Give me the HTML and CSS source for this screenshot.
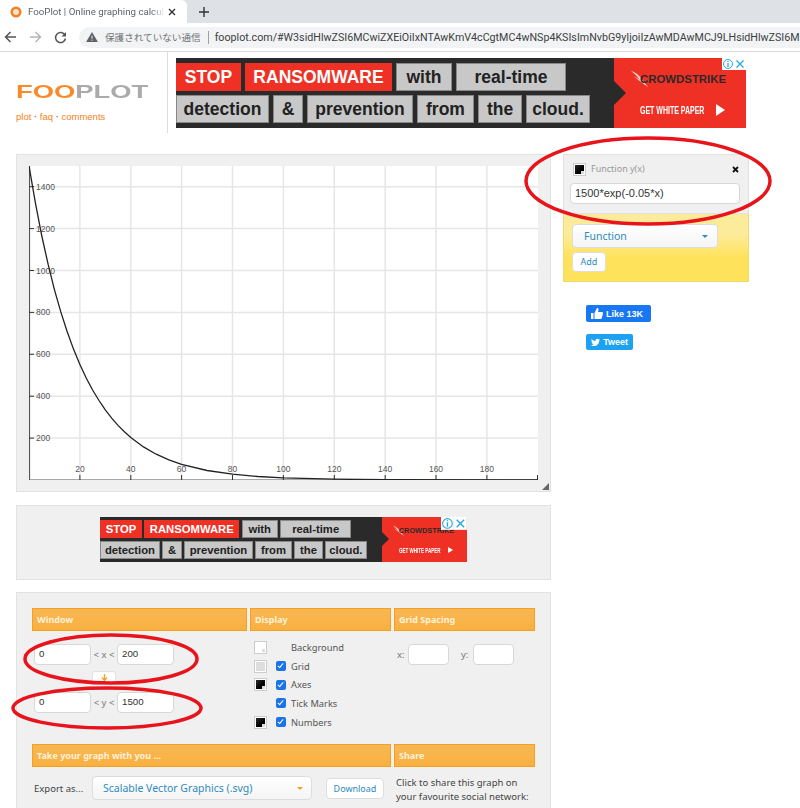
FILE: index.html
```html
<!DOCTYPE html>
<html lang="ja">
<head>
    <meta charset="UTF-8">
    <meta name="viewport" content="width=device-width, initial-scale=1.0">
    <title>FooPlot | Online graphing calculator</title>
    <link rel="stylesheet" href="styles.css">
</head>
<body>
    <!-- Browser chrome -->
    <div class="tabstrip">
        <div class="tab">
            <svg class="favicon" width="12" height="12" viewBox="0 0 12 12"><circle cx="6" cy="6" r="5.500" fill="#f58220"/><path d="M4 4h4v4H4zM6 3v6M3 6h6" fill="none" stroke="#fff" stroke-width="1"/></svg>
            <span class="tab-title">FooPlot | Online graphing calcula</span>
            <svg class="tab-close" width="8" height="8" viewBox="0 0 8 8"><path d="M1 1l6 6M7 1L1 7" stroke="#333" stroke-width="1.400"/></svg>
        </div>
        <svg class="tab-new" width="10" height="10" viewBox="0 0 10 10"><path d="M5 0v10M0 5h10" stroke="#333" stroke-width="1.400"/></svg>
    </div>
    <div class="toolbar">
        <svg width="13" height="12" viewBox="0 0 13 12"><path d="M12 6H2M6.500 1L1.500 6l5 5" fill="none" stroke="#555" stroke-width="1.500"/></svg>
        <svg width="13" height="12" viewBox="0 0 13 12"><path d="M1 6h10M6.500 1l5 5-5 5" fill="none" stroke="#b5b5b5" stroke-width="1.500"/></svg>
        <svg width="13" height="13" viewBox="0 0 13 13"><path d="M11 4.200A5 5 0 1 0 11.500 7.500" fill="none" stroke="#555" stroke-width="1.500"/><path d="M12 1v4.500H7.500z" fill="#555"/></svg>
        <div class="omnibox">
            <svg class="omni-warn" width="12" height="10" viewBox="0 0 13 11"><path d="M6.500 0L13 11H0z" fill="#5f6368"/><path d="M6 4h1v3.500H6zM6 8.500h1v1H6z" fill="#fff"/></svg>
            <span class="not-secure">保護されていない通信</span>
            <span class="omni-sep"></span>
            <span class="url">fooplot.com/#W3sidHlwZSI6MCwiZXEiOiIxNTAwKmV4cCgtMC4wNSp4KSIsImNvbG9yIjoiIzAwMDAwMCJ9LHsidHlwZSI6M</span>
        </div>
    </div>

    <!-- Site header -->
    <div class="site-header">
        <div class="brand">
            <div class="logo"><span class="logo-text"><span class="logo-foo">FOO</span>PLOT</span></div>
            <div class="site-nav">plot <b>·</b> faq <b>·</b> comments</div>
        </div>
        <div class="ad">
            <div class="ad-words">
                <div class="ad-row">
                    <span class="word red w-stop">STOP</span>
                    <span class="word red w-ransom">RANSOMWARE</span>
                    <span class="word w-with">with</span>
                    <span class="word w-real">real-time</span>
                </div>
                <div class="ad-row">
                    <span class="word w-detect">detection</span>
                    <span class="word w-amp">&amp;</span>
                    <span class="word w-prevent">prevention</span>
                    <span class="word w-from">from</span>
                    <span class="word w-the">the</span>
                    <span class="word w-cloud">cloud.</span>
                </div>
            </div>
            <div class="ad-cta">
                <div class="ad-brand">
                    <svg width="18" height="18" viewBox="0 0 18 18"><path d="M0 1c5 1 9 5 17 16C10 12 5 8 2 6c3 1 5 3 7 4C6 6 3 3 0 1z" fill="#fbd5cf"/></svg>
                    <span>CROWDSTRIKE</span>
                </div>
                <div class="ad-paper">
                    <span class="ad-paper-text">GET WHITE PAPER</span>
                    <span class="ad-play"></span>
                </div>
            </div>
            <span class="ad-notch"></span>
            <div class="ad-badges">
                <svg width="12" height="12" viewBox="0 0 12 12"><rect width="12" height="12" fill="#fff"/><circle cx="6" cy="6" r="4.500" fill="none" stroke="#25a9e0"/><path d="M6 5v4M6 3v1" stroke="#25a9e0" stroke-width="1.300"/></svg>
                <svg width="12" height="12" viewBox="0 0 12 12"><rect width="12" height="12" fill="#fff"/><path d="M2.500 2.500l7 7M9.500 2.500l-7 7" stroke="#25a9e0" stroke-width="1.300"/></svg>
            </div>
        </div>
    </div>

    <div class="page">
        <div class="main-col">
            <!-- Graph -->
            <div class="panel plot-panel">
                <svg class="plot" width="509" height="314" viewBox="0 0 509 314">
                    <g class="grid">
                        <path d="M50.900 0V314M101.800 0V314M152.600 0V314M203.500 0V314M254.400 0V314M305.300 0V314M356.200 0V314M407 0V314M457.900 0V314"/>
                        <path d="M0 20.700H509M0 62.600H509M0 104.500H509M0 146.400H509M0 188.300H509M0 230.200H509M0 272.100H509"/>
                    </g>
                    <path class="axes" d="M0.500 0V314H509"/>
                    <path class="ticks" d="M0 20.700h5M0 62.600h5M0 104.500h5M0 146.400h5M0 188.300h5M0 230.200h5M0 272.100h5M50.900 309v5M101.800 309v5M152.600 309v5M203.500 309v5M254.400 309v5M305.300 309v5M356.200 309v5M407 309v5M457.900 309v5M508.500 309v5"/>
                    <g class="tick-y">
                        <text x="7" y="23.700">1400</text>
                        <text x="7" y="65.600">1200</text>
                        <text x="7" y="107.500">1000</text>
                        <text x="7" y="149.400">800</text>
                        <text x="7" y="191.300">600</text>
                        <text x="7" y="233.200">400</text>
                        <text x="7" y="275.100">200</text>
                    </g>
                    <g class="tick-x">
                        <text x="50.900" y="306">20</text>
                        <text x="101.800" y="306">40</text>
                        <text x="152.600" y="306">60</text>
                        <text x="203.500" y="306">80</text>
                        <text x="254.400" y="306">100</text>
                        <text x="305.300" y="306">120</text>
                        <text x="356.200" y="306">140</text>
                        <text x="407" y="306">160</text>
                        <text x="457.900" y="306">180</text>
                    </g>
                    <polyline class="curve" points="0,0 6.400,36.900 12.700,69.500 19.100,98.200 25.400,123.600 31.800,145.900 38.200,165.700 44.500,183.100 50.900,198.500 57.200,212 63.600,224 70,234.500 76.300,243.900 82.700,252.100 89,259.400 95.400,265.800 101.800,271.500 114.500,280.900 127.200,288.200 139.900,293.900 152.600,298.400 178.100,304.500 203.500,308.200 229,310.500 254.400,311.900 305.300,313.200 356,313.700 509,314"/>
                </svg>
                <svg class="resize-grip" width="7" height="7" viewBox="0 0 7 7"><path d="M7 0v7H0z" fill="#666"/></svg>
            </div>

            <!-- Second ad -->
            <div class="panel ad-panel">
                <div class="ad ad-small">
                    <div class="ad-words">
                        <div class="ad-row">
                            <span class="word red w-stop">STOP</span>
                            <span class="word red w-ransom">RANSOMWARE</span>
                            <span class="word w-with">with</span>
                            <span class="word w-real">real-time</span>
                        </div>
                        <div class="ad-row">
                            <span class="word w-detect">detection</span>
                            <span class="word w-amp">&amp;</span>
                            <span class="word w-prevent">prevention</span>
                            <span class="word w-from">from</span>
                            <span class="word w-the">the</span>
                            <span class="word w-cloud">cloud.</span>
                        </div>
                    </div>
                    <div class="ad-cta">
                        <div class="ad-brand">
                            <svg width="18" height="18" viewBox="0 0 18 18"><path d="M0 1c5 1 9 5 17 16C10 12 5 8 2 6c3 1 5 3 7 4C6 6 3 3 0 1z" fill="#fbd5cf"/></svg>
                            <span>CROWDSTRIKE</span>
                        </div>
                        <div class="ad-paper">
                            <span class="ad-paper-text">GET WHITE PAPER</span>
                            <span class="ad-play"></span>
                        </div>
                    </div>
                    <span class="ad-notch"></span>
                    <div class="ad-badges">
                        <svg width="20" height="20" viewBox="0 0 12 12"><rect width="12" height="12" fill="#fff"/><circle cx="6" cy="6" r="4.500" fill="none" stroke="#25a9e0"/><path d="M6 5v4M6 3v1" stroke="#25a9e0" stroke-width="1.300"/></svg>
                        <svg width="20" height="20" viewBox="0 0 12 12"><rect width="12" height="12" fill="#fff"/><path d="M2.500 2.500l7 7M9.500 2.500l-7 7" stroke="#25a9e0" stroke-width="1.300"/></svg>
                    </div>
                </div>
            </div>

            <!-- Settings -->
            <div class="panel settings">
                <div class="settings-grid">
                    <div class="section">
                        <div class="section-title">Window</div>
                        <div class="window-body">
                            <div class="range-row">
                                <span class="field field-range">0</span>
                                <span class="range-op">&lt; x &lt;</span>
                                <span class="field field-range">200</span>
                            </div>
                            <div class="swap-row">
                                <span class="swap-btn"><svg width="7" height="7" viewBox="0 0 7 7"><path d="M3.500 0v6M1 3.500l2.500 3 2.500-3" fill="none" stroke="#f5a020" stroke-width="1.300"/></svg></span>
                            </div>
                            <div class="range-row">
                                <span class="field field-range">0</span>
                                <span class="range-op">&lt; y &lt;</span>
                                <span class="field field-range">1500</span>
                            </div>
                        </div>
                    </div>
                    <div class="section">
                        <div class="section-title">Display</div>
                        <div class="display-body">
                            <div class="display-row"><span class="swatch swatch-white"></span><span class="check-empty"></span><span>Background</span></div>
                            <div class="display-row"><span class="swatch swatch-grey"></span><span class="check"></span><span>Grid</span></div>
                            <div class="display-row"><span class="swatch"></span><span class="check"></span><span>Axes</span></div>
                            <div class="display-row"><span class="swatch-none"></span><span class="check"></span><span>Tick Marks</span></div>
                            <div class="display-row"><span class="swatch"></span><span class="check"></span><span>Numbers</span></div>
                        </div>
                    </div>
                    <div class="section">
                        <div class="section-title">Grid Spacing</div>
                        <div class="spacing-body">
                            <span>x:</span><span class="field field-spacing"></span>
                            <span class="spacing-y">y:</span><span class="field field-spacing"></span>
                        </div>
                    </div>
                    <div class="section section-wide">
                        <div class="section-title">Take your graph with you ...</div>
                        <div class="export-body">
                            <span class="export-label">Export as...</span>
                            <div class="dropdown dropdown-export"><span>Scalable Vector Graphics (.svg)</span><span class="caret caret-orange"></span></div>
                            <span class="btn btn-download">Download</span>
                        </div>
                    </div>
                    <div class="section">
                        <div class="section-title">Share</div>
                        <p class="share-text">Click to share this graph on<br>your favourite social network:</p>
                    </div>
                </div>
            </div>
        </div>

        <div class="side-col">
            <div class="func-panel">
                <div class="func-head">
                    <span class="swatch"></span>
                    <span class="func-label">Function y(x)</span>
                    <svg class="func-close" width="7" height="7" viewBox="0 0 7 7"><path d="M1 1l5 5M6 1L1 6" stroke="#111" stroke-width="1.800"/></svg>
                </div>
                <div class="field func-input">1500*exp(-0.05*x)</div>
            </div>
            <div class="add-panel">
                <div class="dropdown dropdown-func"><span>Function</span><span class="caret"></span></div>
                <span class="btn btn-add">Add</span>
            </div>
            <div class="social">
                <span class="social-btn like">
                    <svg width="12" height="11" viewBox="0 0 12 11"><path d="M0 5h2.500v6H0zM3.500 5l2.500-5c1.300 0 1.700 1 1.500 2L7 4h4c.8 0 1.200.7 1 1.400l-1.200 4.600c-.2.600-.6 1-1.200 1H3.500z" fill="#fff"/></svg>
                    Like 13K
                </span>
                <span class="social-btn tweet">
                    <svg width="11" height="9" viewBox="0 0 24 20"><path d="M24 2.400c-.9.400-1.800.7-2.800.8 1-.6 1.800-1.600 2.200-2.700-1 .6-2 1-3.100 1.200A4.900 4.900 0 0 0 11.900 6.200C7.800 6 4.200 4 1.700.9c-1.300 2.200-.7 5.100 1.500 6.600-.8 0-1.600-.2-2.200-.6 0 2.300 1.600 4.400 3.900 4.900-.7.200-1.500.2-2.200.1.600 2 2.400 3.400 4.600 3.400A9.900 9.900 0 0 1 0 17.300 14 14 0 0 0 7.500 19.500c9.100 0 14.300-7.700 14-14.600 1-.7 1.800-1.500 2.500-2.500z" fill="#fff"/></svg>
                    Tweet
                </span>
            </div>
        </div>
    </div>

    <!-- Hand-drawn red circles over the page -->
    <svg class="annotations" width="800" height="808" viewBox="0 0 800 808">
        <ellipse cx="648" cy="181" rx="122" ry="43"/>
        <ellipse cx="111" cy="659" rx="86" ry="24"/>
        <ellipse cx="107" cy="708" rx="94" ry="20"/>
    </svg>
</body>
</html>
```

FILE: styles.css
```css
body {
    margin: 0;
    height: 808px;
    overflow: hidden;
    position: relative;
    background: #fff;
    color: #333;
    font-family: 'Noto Sans', sans-serif;
    font-size: 9px;
}

/* Browser chrome */
.tabstrip {
    height: 23px;
    background: #dee1e6;
    display: flex;
    align-items: center;
}

.tab {
    width: 187px;
    height: 23px;
    box-sizing: border-box;
    background: #fff;
    border-top-right-radius: 6px;
    display: flex;
    align-items: center;
    padding-left: 10px;
}

.tab-title {
    font-family: 'Roboto', sans-serif;
    font-size: 9.700px;
    color: #5f6368;
    width: 137px;
    margin-left: 6px;
    white-space: nowrap;
    overflow: hidden;
    mask-image: linear-gradient(90deg, #000 90%, transparent);
}

.tab-close {
    margin-left: 3px;
}

.tab-new {
    margin-left: 12px;
}

.toolbar {
    height: 29px;
    box-sizing: border-box;
    border-bottom: 1px solid #dcdcdc;
    display: flex;
    align-items: center;
    gap: 12px;
    padding-left: 4px;
}

.omnibox {
    flex: 1;
    min-width: 0;
    height: 21px;
    background: #f1f3f4;
    border-radius: 11px 0 0 11px;
    display: flex;
    align-items: center;
    padding-left: 7px;
    overflow: hidden;
    white-space: nowrap;
}

.omni-warn {
    flex: none;
}

.not-secure {
    flex: none;
    font-family: 'Noto Sans CJK JP', sans-serif;
    font-size: 9.600px;
    color: #6f7377;
    margin-left: 7px;
}

.omni-sep {
    flex: none;
    width: 1px;
    height: 13px;
    background: #9aa0a6;
    margin: 0 6px 0 7px;
}

.url {
    font-family: 'Roboto', sans-serif;
    font-size: 10.700px;
    color: #3c4043;
}

/* Header */
.site-header {
    display: flex;
    height: 81px;
}

.brand {
    width: 168px;
    border-right: 1px solid #ddd;
    padding-left: 16px;
    box-sizing: border-box;
}

.logo {
    margin-top: 30px;
    height: 20px;
}

.logo-text {
    display: inline-block;
    font-family: 'Liberation Sans', sans-serif;
    font-weight: bold;
    font-size: 18px;
    line-height: 20px;
    color: #aaa;
    transform: scaleX(1.520);
    transform-origin: left center;
}

.logo-foo {
    color: #f88a2c;
}

.site-nav {
    margin-top: 9px;
    font-family: 'Liberation Sans', sans-serif;
    font-size: 9.500px;
    color: #f58220;
}

.site-nav b {
    color: #888;
}

/* Ad banner */
.ad {
    position: relative;
    display: flex;
    width: 570px;
    height: 70px;
    margin: 6px 0 0 8px;
    font-family: 'Liberation Sans', sans-serif;
}

.ad-small {
    zoom: 0.644;
    margin: 0;
}

.ad-words {
    width: 438px;
    box-sizing: border-box;
    background: #2a2a2a;
    padding-top: 5px;
    display: flex;
    flex-direction: column;
    gap: 4px;
}

.ad-row {
    display: flex;
    gap: 4px;
}

.word {
    height: 28px;
    box-sizing: border-box;
    background: #c8c8c8;
    border: 1px solid #888;
    color: #222;
    font-weight: bold;
    font-size: 17.500px;
    line-height: 26px;
    text-align: center;
}

.word.red {
    background: #ee3124;
    border-color: #ee3124;
    color: #fff;
}

.w-stop { width: 65px; }
.w-ransom { width: 147px; }
.w-with { width: 56px; }
.w-real { width: 110px; }
.w-detect { width: 93px; }
.w-amp { width: 30px; }
.w-prevent { width: 106px; }
.w-from { width: 57px; }
.w-the { width: 44px; }
.w-cloud { width: 64px; }

.ad-cta {
    width: 132px;
    background: #ee3124;
    display: flex;
    flex-direction: column;
}

.ad-brand {
    display: flex;
    align-items: center;
    margin: 12px 0 0 17px;
    height: 18px;
    font-weight: bold;
    font-size: 11.400px;
    color: #2a2a2a;
}

.ad-brand svg {
    margin-right: -9px;
    flex: none;
}

.ad-paper {
    display: flex;
    align-items: center;
    margin: 15px 0 0 26px;
    height: 14px;
    color: #fff;
}

.ad-paper-text {
    width: 76px;
    font-weight: bold;
    font-size: 10px;
    white-space: nowrap;
    transform: scaleX(0.700);
    transform-origin: left center;
}

.ad-play {
    width: 0;
    height: 0;
    border-left: 9px solid #fff;
    border-top: 6px solid transparent;
    border-bottom: 6px solid transparent;
}

.ad-notch {
    position: absolute;
    left: 438px;
    top: 23px;
    width: 0;
    height: 0;
    border-left: 12px solid #2a2a2a;
    border-top: 12px solid transparent;
    border-bottom: 12px solid transparent;
}

.ad-badges {
    position: absolute;
    top: 0;
    right: 0;
    display: flex;
}

/* Page columns */
.page {
    display: flex;
    padding: 21px 0 0 16px;
    gap: 12px;
}

.main-col {
    width: 535px;
    flex: none;
}

.panel {
    background: #f0f0f0;
    border: 1px solid #e2e2e2;
    box-sizing: border-box;
    margin-bottom: 12px;
}

.plot-panel {
    position: relative;
    height: 338px;
    margin-bottom: 13px;
    padding: 11px 0 0 12px;
}

.plot {
    display: block;
    background: #fff;
}

.grid path {
    fill: none;
    stroke: #e6e6e6;
    stroke-width: 1.500;
}

.axes {
    fill: none;
    stroke: #555;
    stroke-width: 1.200;
}

.ticks {
    fill: none;
    stroke: #333;
    stroke-width: 1;
}

.curve {
    fill: none;
    stroke: #222;
    stroke-width: 1.300;
}

.plot text {
    font-family: 'Liberation Sans', sans-serif;
    font-size: 8.500px;
    fill: #555;
}

.tick-x text {
    text-anchor: middle;
}

.resize-grip {
    position: absolute;
    right: 1px;
    bottom: 1px;
}

.ad-panel {
    height: 75px;
    padding: 11px 0 0 83px;
}

.settings {
    height: 240px;
    padding: 15px 15px 0;
}

.settings-grid {
    display: grid;
    grid-template-columns: 215px 141px 141px;
    grid-template-rows: 136px auto;
    gap: 0 3px;
}

.section-wide {
    grid-column: span 2;
}

.section-title {
    height: 23px;
    box-sizing: border-box;
    background: linear-gradient(#f8b755, #f9b03f);
    border: 1px solid #f5a020;
    color: #fff2dc;
    font-weight: bold;
    font-size: 9px;
    line-height: 21px;
    padding-left: 4px;
}

.field {
    display: block;
    box-sizing: border-box;
    background: #fff;
    border: 1px solid #d8d8d8;
    border-radius: 4px;
    color: #333;
}

.window-body {
    padding: 13px 0 0 2px;
}

.range-row {
    display: flex;
    align-items: center;
}

.field-range {
    width: 57px;
    height: 21px;
    font-family: 'Liberation Sans', sans-serif;
    font-size: 9.700px;
    line-height: 17px;
    padding-left: 4px;
}

.range-op {
    width: 26px;
    text-align: center;
    color: #777;
    font-size: 9.500px;
}

.swap-row {
    height: 27px;
    box-sizing: border-box;
    padding: 6px 0 0 58px;
}

.swap-btn {
    display: flex;
    align-items: center;
    justify-content: center;
    width: 24px;
    height: 11px;
    box-sizing: border-box;
    background: #fff;
    border: 1px solid #e2e2e2;
    border-bottom: 0;
    border-radius: 3px 3px 0 0;
}

.display-body {
    padding: 7px 0 0 4px;
}

.display-row {
    height: 18.700px;
    display: flex;
    align-items: center;
    color: #555;
    font-size: 9.300px;
}

.swatch {
    flex: none;
    display: block;
    position: relative;
    width: 13px;
    height: 13px;
    box-sizing: border-box;
    border: 1px solid #ccc;
    box-shadow: inset 0 0 0 1px #fff;
    background: linear-gradient(135deg, #333, #000 60%);
}

.swatch::after {
    content: "";
    position: absolute;
    right: 1px;
    bottom: 1px;
    width: 3px;
    height: 3px;
    background: #ddd;
}

.swatch-white {
    background: #fff;
}

.swatch-grey {
    background: #ddd;
}

.swatch-none {
    flex: none;
    width: 13px;
}

.check,
.check-empty {
    flex: none;
    width: 10px;
    height: 10px;
    margin: 0 5px 0 9px;
    border-radius: 2px;
}

.check {
    background: #1a73e8;
    position: relative;
}

.check::after {
    content: "";
    position: absolute;
    left: 3px;
    top: 1px;
    width: 2px;
    height: 5px;
    border: solid #fff;
    border-width: 0 1.500px 1.500px 0;
    transform: rotate(40deg);
}

.spacing-body {
    display: flex;
    align-items: center;
    padding: 13px 0 0 3px;
    color: #777;
    font-size: 9.500px;
}

.spacing-body span:first-child {
    width: 11px;
}

.spacing-y {
    width: 12px;
    margin-left: 12px;
}

.field-spacing {
    width: 41px;
    height: 21px;
}

.export-body {
    display: flex;
    align-items: center;
    padding: 9px 0 0 2px;
    color: #444;
    font-size: 9.500px;
}

.export-label {
    width: 58px;
    flex: none;
}

.dropdown {
    box-sizing: border-box;
    display: flex;
    align-items: center;
    justify-content: space-between;
    background: linear-gradient(#fff, #f4f4f4);
    border: 1px solid #ddd;
    border-radius: 4px;
    color: #2e8bc0;
    font-size: 10.500px;
}

.dropdown-export {
    width: 220px;
    height: 24px;
    padding: 0 8px 0 10px;
}

.dropdown-func {
    width: 146px;
    height: 24px;
    padding: 0 9px 0 11px;
}

.caret {
    width: 0;
    height: 0;
    border-left: 3px solid transparent;
    border-right: 3px solid transparent;
    border-top: 3px solid #2e8bc0;
}

.caret-orange {
    border-top-color: #f5a020;
}

.btn {
    display: block;
    box-sizing: border-box;
    background: #fff;
    border: 1px solid #ddd;
    border-radius: 4px;
    color: #2e8bc0;
    text-align: center;
    font-size: 9px;
}

.btn-download {
    width: 58px;
    height: 21px;
    line-height: 19px;
    margin-left: 14px;
}

.btn-add {
    width: 34px;
    height: 20px;
    line-height: 18px;
    margin-top: 4px;
}

.share-text {
    margin: 9px 0 0 2px;
    color: #444;
    font-size: 9.500px;
    line-height: 14px;
    white-space: nowrap;
}

/* Right column */
.side-col {
    width: 186px;
    flex: none;
}

.func-panel {
    height: 60px;
    box-sizing: border-box;
    background: #f0f0f0;
    border: 1px solid #e2e2e2;
    padding: 7px 6px 0;
}

.func-head {
    display: flex;
    align-items: center;
    padding-left: 3px;
    height: 14px;
}

.func-label {
    margin: -2px 0 0 5px;
    color: #999;
    font-size: 9px;
}

.func-close {
    margin: 0 3px 0 auto;
}

.func-input {
    width: 170px;
    height: 21px;
    margin-top: 7px;
    font-family: 'Liberation Sans', sans-serif;
    font-size: 11px;
    line-height: 19px;
    padding-left: 4px;
}

.add-panel {
    height: 68px;
    box-sizing: border-box;
    background: linear-gradient(#fdeb9c 30%, #ffe25c 65%);
    border: 1px solid #f0d870;
    border-top: 0;
    padding: 10px 0 0 8px;
}

.social {
    margin: 23px 0 0 23px;
    display: flex;
    flex-direction: column;
    align-items: flex-start;
    gap: 12px;
}

.social-btn {
    display: flex;
    align-items: center;
    gap: 3px;
    box-sizing: border-box;
    height: 17px;
    padding: 0 5px;
    border-radius: 2px;
    color: #fff;
    font-family: 'Liberation Sans', sans-serif;
    font-weight: bold;
    font-size: 9px;
}

.like {
    background: #1877f2;
    width: 65px;
}

.tweet {
    background: #1da1f2;
    width: 47px;
    height: 16px;
}

/* Red circles */
.annotations {
    position: absolute;
    left: 0;
    top: 0;
    pointer-events: none;
}

.annotations ellipse {
    fill: none;
    stroke: #e8141c;
    stroke-width: 3.500;
}
```
